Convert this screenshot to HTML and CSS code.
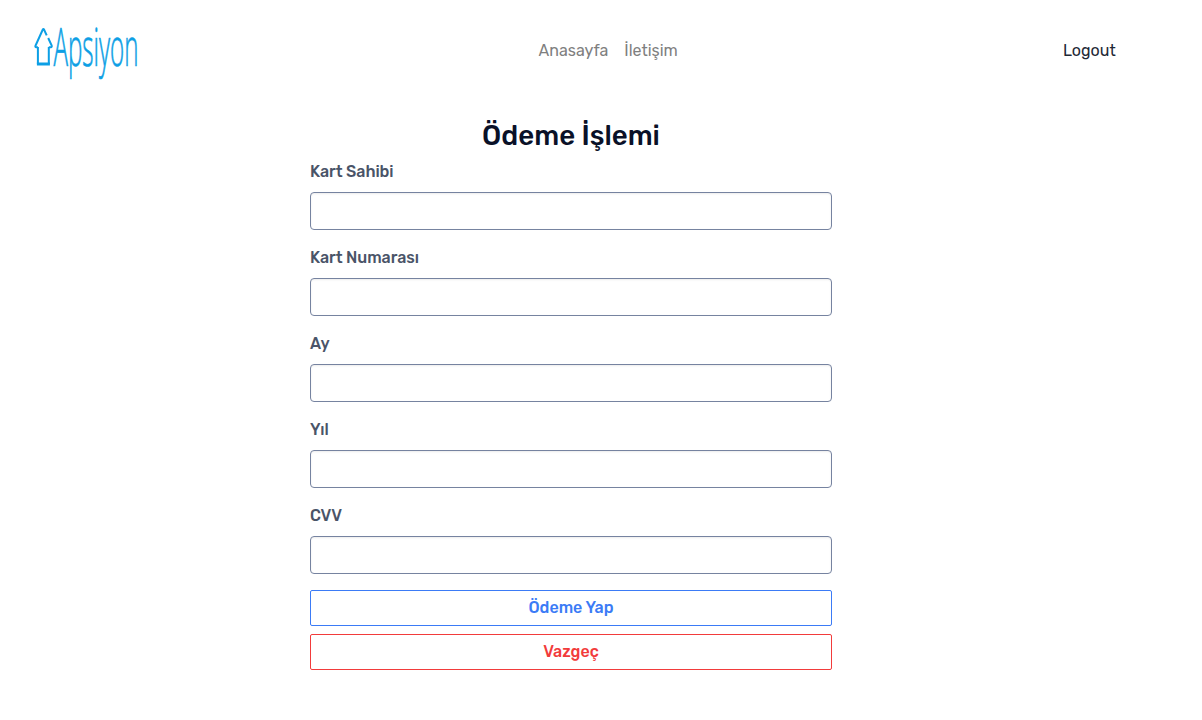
FILE: index.html
```html
<!DOCTYPE html>
<html lang="tr">
<head>
<meta charset="utf-8">
<title>Apsiyon</title>
<link rel="stylesheet" href="styles.css">
</head>
<body>
<header class="navbar">
  <a class="brand" aria-label="Apsiyon">
    <svg width="140" height="80" viewBox="30 10 140 80">
      <path class="house" d="M37.9 47V64M48.8 47V64M37.9 47.2h-1.8q-1.2-.2-.5-1.7l7.3-16.2q.5-.8 1 0l2.8 6M48.2 38l3.4 7.3q.5 1.7-.6 1.9h-2.2"/>
      <path class="base" d="M36.9 64h13"/>
      <text class="wordmark" x="53.5" y="65.7" textLength="85" lengthAdjust="spacingAndGlyphs">Apsiyon</text>
    </svg>
  </a>
  <nav class="links"><a>Anasayfa</a><a>İletişim</a></nav>
  <a class="logout">Logout</a>
</header>
<main class="payment">
  <h1>Ödeme İşlemi</h1>
  <form>
    <div class="field"><label for="owner">Kart Sahibi</label><input id="owner" type="text"></div>
    <div class="field"><label for="number">Kart Numarası</label><input id="number" type="text"></div>
    <div class="field"><label for="month">Ay</label><input id="month" type="text"></div>
    <div class="field"><label for="year">Yıl</label><input id="year" type="text"></div>
    <div class="field"><label for="cvv">CVV</label><input id="cvv" type="text"></div>
    <div class="actions">
      <button class="pay" type="button">Ödeme Yap</button>
      <button class="cancel" type="button">Vazgeç</button>
    </div>
  </form>
</main>
</body>
</html>
```
FILE: styles.css
```css
* { box-sizing: border-box; }
body {
  margin: 0;
  background: #fff;
  color: #0a1128;
  font: 400 16px/24px Rubik, Roboto, sans-serif;
}
.navbar {
  display: grid;
  grid-template-columns: 508.5px 1fr 139px;
  align-items: center;
  height: 102px;
  padding-left: 30px;
}
.brand { display: block; height: 80px; margin-bottom: 2px; }
.brand svg { display: block; overflow: visible; }
.house { fill: none; stroke: #0c9fe5; stroke-width: 2; }
.base { stroke: #0c9fe5; stroke-width: 3; }
.wordmark {
  fill: #0c9fe5;
  stroke: #0c9fe5;
  stroke-width: .7px;
  font: 300 52.5px "Open Sans", sans-serif;
}
.links { display: flex; gap: 16px; color: #7f7f7f; }
.logout { color: #1f2937; }
.payment { width: 522px; margin: 17px 0 0 310px; }
h1 {
  margin: 0 0 7px;
  text-align: center;
  font-size: 27.65px;
  font-weight: 500;
  line-height: 34px;
}
.field { margin-bottom: 16px; }
label {
  display: block;
  margin-bottom: 8px;
  color: #4a5468;
  font-weight: 500;
  letter-spacing: -.05px;
}
input {
  display: block;
  width: 100%;
  height: 38px;
  padding: 6px 12px;
  border: 1px solid #7683a0;
  border-radius: 4px;
  background: #fff;
  box-shadow: inset 0 1px 2px rgba(0, 0, 0, .075);
}
.actions { display: grid; gap: 8px; }
button {
  height: 36px;
  padding: 0;
  border: 1px solid;
  border-radius: 2px;
  background: #fff;
  font: 500 16px/24px Rubik, Roboto, sans-serif;
}
.pay { color: #3b7bf6; }
.cancel { color: #f23b3b; }
```
